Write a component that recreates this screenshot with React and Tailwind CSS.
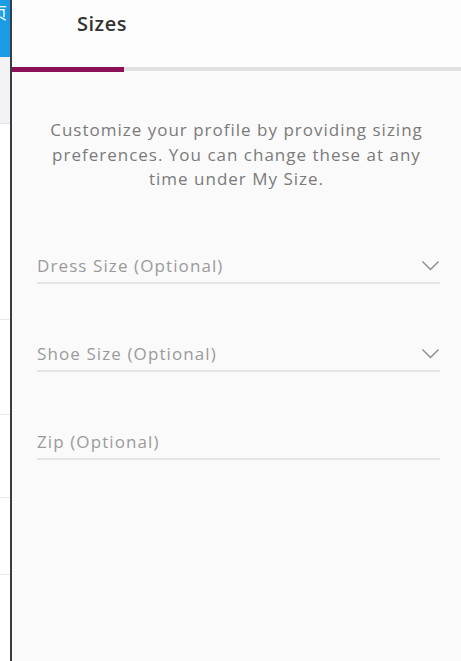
import React from 'react';

function Chevron() {
    return (
        <svg width="19" height="11" viewBox="0 0 19 11" fill="none" className="shrink-0">
            <path d="M1.5 1.5l8 8 8-8" stroke="#8f8f8f" strokeWidth="1.5" />
        </svg>
    );
}

function Field({ label, select }) {
    return (
        <div className="flex items-center justify-between border-b-2 border-[#e8e4e4] pb-[4px]">
            <span className="text-[17px] leading-[24px] tracking-[1.1px] text-[#9a9a9a]">{label}</span>
            {select && <Chevron />}
        </div>
    );
}

function SideStrip() {
    return (
        <div className="w-[10px] shrink-0 flex flex-col overflow-hidden bg-white">
            <div className="h-[57px] bg-[#1a9be6] overflow-hidden">
                <span className="block -ml-[9px] mt-[2px] text-[16px] leading-[20px] text-white font-['Noto_Sans_CJK_SC',sans-serif]">页</span>
            </div>
            <div className="h-[67px] bg-[#f3f3f3] border-b border-[#e4e4e4]" />
            <div className="h-[196px] border-b border-[#e8e8e8]" />
            <div className="h-[95px] border-b border-[#e8e8e8]" />
            <div className="h-[83px] border-b border-[#e8e8e8]" />
            <div className="h-[77px] border-b border-[#e8e8e8]" />
            <div className="flex-1" />
        </div>
    );
}

export default function App() {
    return (
        <div className="flex w-[461px] h-[661px] overflow-hidden bg-[#fafafa] font-['Open_Sans',sans-serif]">
            <SideStrip />
            <div className="w-[2px] shrink-0 bg-[#3b3b45]" />
            <div className="flex-1 flex flex-col">
                <div className="bg-[#fdfdfd]">
                    <div className="h-[67px] pl-[65px] pt-[10px]">
                        <span className="text-[20px] leading-[28px] font-semibold tracking-[0.5px] text-[#333]">Sizes</span>
                    </div>
                    <div className="flex h-[5px]">
                        <div className="w-[112px] bg-[#8c0f5a]" />
                        <div className="flex-1 h-[4px] bg-[#e2e2e2]" />
                    </div>
                </div>
                <p className="mt-[46px] px-[33px] text-center text-[17px] leading-[24.5px] tracking-[1px] text-[#7a7a7a]">
                    Customize your profile by providing sizing preferences. You can change these at any time under My Size.
                </p>
                <div className="mt-[62px] pl-[25px] pr-[21px] flex flex-col gap-[58px]">
                    <Field label="Dress Size (Optional)" select />
                    <Field label="Shoe Size (Optional)" select />
                    <Field label="Zip (Optional)" />
                </div>
            </div>
        </div>
    );
}
